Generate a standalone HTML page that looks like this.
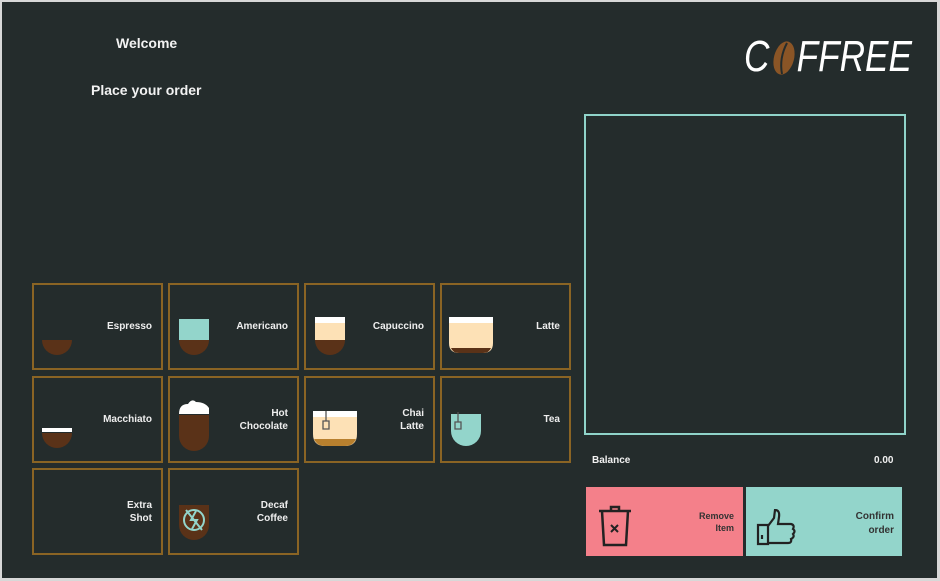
<!DOCTYPE html>
<html><head><meta charset="utf-8"><style>
*{margin:0;padding:0;box-sizing:border-box}
html,body{width:940px;height:581px;overflow:hidden;background:#d8d8d8}
#f{position:absolute;left:2px;top:2px;width:935px;height:576px;background:#242c2c;font-family:"Liberation Sans",sans-serif;color:#f2f2f2;font-weight:bold}
.t{position:absolute;width:131px;height:87px;border:2px solid #8a6424}
.l{position:absolute;right:9px;top:0;height:100%;display:flex;align-items:center;text-align:right;font-size:10px;line-height:13px;color:#eee}
.ic{position:absolute;left:0;top:0}
.abs{position:absolute}
</style></head><body><div id="f">
<div class="abs" style="left:114px;top:33px;font-size:14px">Welcome</div>
<div class="abs" style="left:89px;top:80px;font-size:14px">Place your order</div>
<div class="abs" style="left:742px;top:30px;font-size:44px;font-style:italic;font-weight:normal;line-height:50px;color:#fff;transform:scaleX(0.8);transform-origin:left top;white-space:nowrap">C<span style="display:inline-block;width:34px"></span>FFREE</div>
<svg class="abs" style="left:767px;top:36px" width="30" height="40"><ellipse cx="15" cy="20" rx="10" ry="17" fill="#8a5526" transform="rotate(15 15 20)"/><path d="M18 5 Q10 20 13 36" stroke="#242c2c" stroke-width="2" fill="none"/></svg>

<div class="abs" style="left:582px;top:112px;width:322px;height:321px;border:2px solid #8fd3c9"></div>
<div class="abs" style="left:590px;top:453px;font-size:10px">Balance</div>
<div class="abs" style="left:872px;top:453px;font-size:10px">0.00</div>
<div class="abs" style="left:584px;top:485px;width:157px;height:69px;background:#f4808a"></div>
<div class="abs" style="left:744px;top:485px;width:156px;height:69px;background:#93d5cb"></div>
<div class="abs" style="left:680px;top:508px;width:52px;text-align:right;font-size:9px;line-height:12px;color:#333">Remove<br>Item</div>
<div class="abs" style="left:830px;top:508px;width:62px;text-align:right;font-size:10px;line-height:14px;color:#333">Confirm<br>order</div>
<svg class="abs" style="left:596px;top:503px" width="36" height="44" fill="none" stroke="#222" stroke-width="2.5"><path d="M1 6H33M13 6V2H21V6M4 6L6 40H28L30 6"/><path d="M13 20L20 27M20 20L13 27" stroke-width="2"/></svg>
<svg class="abs" style="left:754px;top:507px" width="42" height="38" fill="none" stroke="#222" stroke-width="2.2"><path d="M2 16H12V35H2Z"/><path d="M12 17L18 9L19 1Q24 1 23 8L22 15H35Q39 16 37 20Q40 22 37 25Q39 28 35 30Q36 34 32 34H12"/><path d="M6 26V30"/></svg>

<div class="t" style="left:30px;top:281px"><svg class="ic" width="70" height="83"><path d="M8 55H38A15 15 0 0 1 8 55Z" fill="#5a3218"/></svg><div class="l">Espresso</div></div>
<div class="t" style="left:166px;top:281px"><svg class="ic" width="70" height="83"><rect x="9" y="34" width="30" height="21" fill="#93d5cb"/><path d="M9 55H39A15 15 0 0 1 9 55Z" fill="#5a3218"/></svg><div class="l">Americano</div></div>
<div class="t" style="left:302px;top:281px"><svg class="ic" width="70" height="83"><rect x="9" y="32" width="30" height="6" fill="#fff"/><rect x="9" y="38" width="30" height="17" fill="#fde1b6"/><path d="M9 55H39A15 15 0 0 1 9 55Z" fill="#5a3218"/></svg><div class="l">Capuccino</div></div>
<div class="t" style="left:438px;top:281px"><svg class="ic" width="70" height="83"><rect x="7" y="32" width="44" height="6" fill="#fff"/><path d="M7 38H51V58Q51 68 41 68H17Q7 68 7 58Z" fill="#fde1b6"/><path d="M9 63H49Q47 68 41 68H17Q11 68 9 63Z" fill="#5a3218"/></svg><div class="l">Latte</div></div>

<div class="t" style="left:30px;top:374px"><svg class="ic" width="70" height="83"><rect x="8" y="50" width="30" height="4" fill="#fff"/><path d="M8 55H38A15 15 0 0 1 8 55Z" fill="#5a3218"/></svg><div class="l">Macchiato</div></div>
<div class="t" style="left:166px;top:374px"><svg class="ic" width="70" height="83"><path d="M9 36Q9 26 18 26Q22 20 26 24Q35 24 39 30V36Z" fill="#fff"/><path d="M9 37H39V58A15 15 0 0 1 9 58Z" fill="#5a3218"/></svg><div class="l">Hot<br>Chocolate</div></div>
<div class="t" style="left:302px;top:374px"><svg class="ic" width="70" height="83"><rect x="7" y="33" width="44" height="6" fill="#fff"/><path d="M7 39H51V56Q51 68 39 68H19Q7 68 7 56Z" fill="#fde1b6"/><path d="M8 61H50Q47 68 39 68H19Q11 68 8 61Z" fill="#b8802e"/><path d="M20 33V43M17 43H23V51H17Z" stroke="#555" stroke-width="1.3" fill="none"/></svg><div class="l">Chai<br>Latte</div></div>
<div class="t" style="left:438px;top:374px"><svg class="ic" width="70" height="83"><path d="M9 36H39V53A15 15 0 0 1 9 53Z" fill="#93d5cb"/><path d="M16 34V44M13 44H19V51H13Z" stroke="#555" stroke-width="1.3" fill="none"/></svg><div class="l">Tea</div></div>

<div class="t" style="left:30px;top:466px"><div class="l">Extra<br>Shot</div></div>
<div class="t" style="left:166px;top:466px"><svg class="ic" width="70" height="83"><path d="M9 35H39V55A15 15 0 0 1 9 55Z" fill="#5a3218"/><circle cx="24" cy="50" r="10" stroke="#93d5cb" stroke-width="2" fill="none"/><path d="M16 40L32 60M26 41L21 50H27L22 59" stroke="#93d5cb" stroke-width="2" fill="none"/></svg><div class="l">Decaf<br>Coffee</div></div>
</div></body></html>
